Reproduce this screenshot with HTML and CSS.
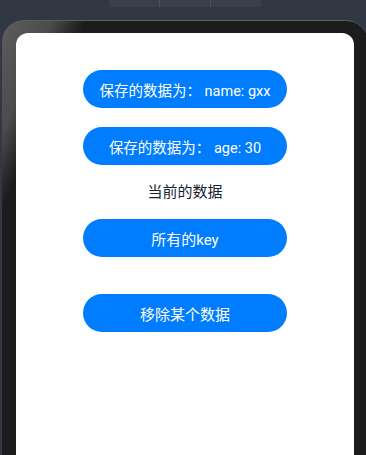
FILE: index.html
```html
<!DOCTYPE html>
<html lang="zh-CN">
<head>
<meta charset="utf-8">
<title>数据存储</title>
<link rel="stylesheet" href="styles.css">
</head>
<body>
<div class="tabs">
  <div class="tab"></div>
  <div class="tab"></div>
  <div class="tab"></div>
</div>
<div class="device">
  <div class="screen">
    <button class="btn btn-small">保存的数据为： name: gxx</button>
    <button class="btn btn-small btn-gap">保存的数据为： age: 30</button>
    <div class="label">当前的数据</div>
    <button class="btn btn-keys">所有的key</button>
    <button class="btn btn-remove">移除某个数据</button>
  </div>
</div>
</body>
</html>
```

FILE: styles.css
```css
html, body {
  margin: 0;
  padding: 0;
  height: 100%;
  overflow: hidden;
}

body {
  background: #323843;
  font-family: Roboto, "Noto Sans CJK SC", sans-serif;
}

.tabs {
  display: flex;
  width: 152px;
  height: 7px;
  margin-left: 109px;
  background: #3a3f4a;
}

.tab {
  flex: 1;
  border-right: 1px solid #4d525c;
}

.tab:last-child {
  border-right: none;
}

.device {
  width: 366px;
  height: 435px;
  margin: 13px 0 0 2px;
  padding: 12px 14px 0 14px;
  box-sizing: border-box;
  border-radius: 22px 22px 0 0;
  border-top: 1px solid #5a5d63;
  background: linear-gradient(114deg, #5c5c5c 0%, #4c4c4c 9%, #2a2a2a 13%, #1c1c1c 15%, #1c1c1c 100%);
}

.screen {
  height: 100%;
  background: #ffffff;
  border-radius: 12px 12px 0 0;
  display: flex;
  flex-direction: column;
  align-items: center;
  padding-top: 37px;
  box-sizing: border-box;
}

.btn {
  width: 204px;
  height: 38px;
  border: none;
  border-radius: 19px;
  background: #007dff;
  color: #ffffff;
  font-family: Roboto, "Noto Sans CJK SC", sans-serif;
  font-size: 15px;
  padding: 0;
  flex: none;
}

.btn-small {
  font-size: 14.5px;
}

.btn-gap {
  margin-top: 19px;
}

.label {
  margin-top: 17px;
  height: 20px;
  line-height: 20px;
  font-size: 15px;
  color: #182431;
}

.btn-keys {
  margin-top: 17px;
}

.btn-remove {
  margin-top: 37px;
}
```
